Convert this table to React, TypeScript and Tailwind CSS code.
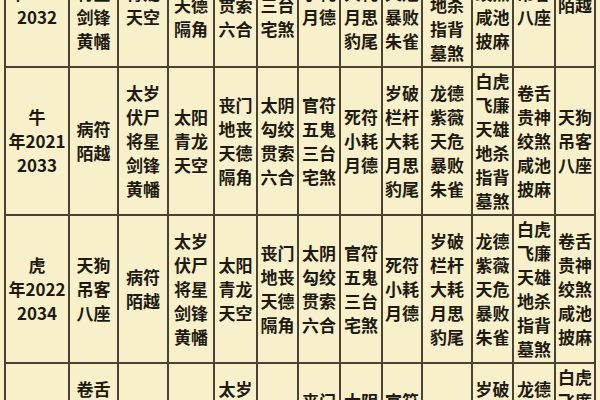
const colWidths = [62, 47, 48, 44, 41, 39, 40, 40, 38, 48, 39, 40, 38];

// the twelve star groups, in the order they rotate through the columns
const stars = [
  ['太岁', '伏尸', '将星', '剑锋', '黄幡'],
  ['太阳', '青龙', '天空'],
  ['丧门', '地丧', '天德', '隔角'],
  ['太阴', '勾绞', '贯索', '六合'],
  ['官符', '五鬼', '三台', '宅煞'],
  ['死符', '小耗', '月德'],
  ['岁破', '栏杆', '大耗', '月思', '豹尾'],
  ['龙德', '紫薇', '天危', '暴败', '朱雀'],
  ['白虎', '飞廉', '天雄', '地杀', '指背', '墓煞'],
  ['卷舌', '贵神', '绞煞', '咸池', '披麻'],
  ['天狗', '吊客', '八座'],
  ['病符', '陌越'],
];

const years = [
  ['鼠', '年2020', '2032'],
  ['牛', '年2021', '2033'],
  ['虎', '年2022', '2034'],
  ['兔', '年2023', '2035'],
];

function Cell({ lines }: { lines: string[] }) {
  return (
    <div className="flex flex-col items-center justify-center bg-[#f7f0cb] text-center">
      {lines.map((l, i) => (
        <span key={i} className="whitespace-nowrap">
          {l}
        </span>
      ))}
    </div>
  );
}

export default function App() {
  return (
    <div className="h-[400px] w-[600px] overflow-hidden bg-[#f7f0cb]">
      <div
        className="ml-[4px] mt-[-82px] grid w-[592px] gap-[2px] bg-[#4a4330] p-[2px] text-[17px] leading-[24px] font-semibold text-[#1e1a10]"
        style={{
          gridTemplateColumns: colWidths.map((w) => `${w}px`).join(' '),
          gridAutoRows: '146px',
          fontFamily: '"Noto Sans CJK SC", "Noto Sans", sans-serif',
        }}
      >
        {years.map((y, r) => (
          <div key={r} className="contents">
            <Cell lines={y} />
            {Array.from({ length: 12 }, (_, c) => (
              <Cell key={c} lines={stars[(c - r + 12) % 12]} />
            ))}
          </div>
        ))}
      </div>
    </div>
  );
}
